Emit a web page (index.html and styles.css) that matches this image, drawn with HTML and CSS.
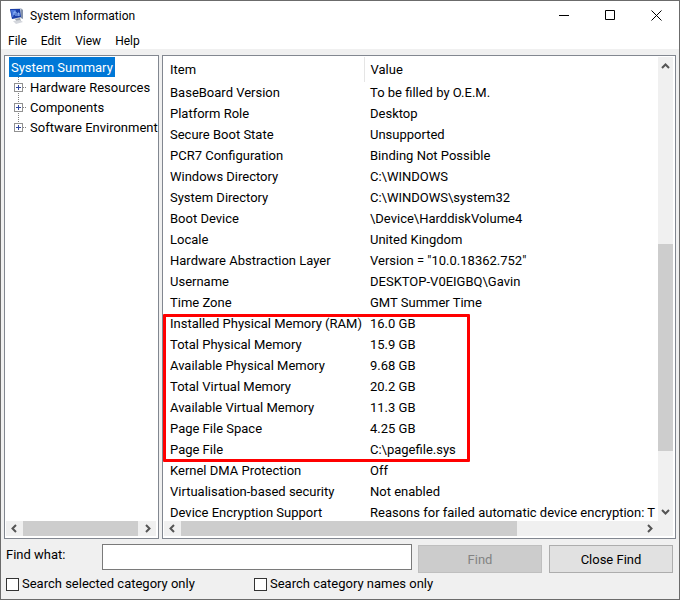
FILE: index.html
```html
<!DOCTYPE html>
<html lang="en">
<head>
    <meta charset="UTF-8">
    <meta name="viewport" content="width=device-width, initial-scale=1.0">
    <title>System Information</title>
    <link rel="stylesheet" href="styles.css">
</head>
<body>
    <div class="window">
        <header class="titlebar">
            <svg class="app-icon" width="16" height="16" viewBox="0 0 16 16">
                <path d="M1 1 L12 0 L14 2 L14 10 L3 11 Z" fill="#c3cbd8"/>
                <path d="M1 1 L11 1 L12 9 L3 11 Z" fill="#1b3fa8"/>
                <path d="M2 2 L7 2 L4 9 L3 9 Z" fill="#4d78dc"/>
                <path d="M5 7 V4 H7 V8 M9 8 V5 H10 V8" fill="none" stroke="#9fc4ff"/>
                <path d="M12 1 L14 2 L14 11 L12 10 Z" fill="#8592aa"/>
                <path d="M6 11 L11 10 L12 13 L8 14 Z" fill="#9da3ae"/>
                <path d="M4 13 L11 12 L14 14 L7 16 Z" fill="#d3d6dc"/>
            </svg>
            <h1>System Information</h1>
            <div class="window-buttons">
                <button type="button" aria-label="Minimise">
                    <svg width="11" height="11"><path d="M0 5.5 H10"/></svg>
                </button>
                <button type="button" aria-label="Maximise">
                    <svg width="11" height="11"><path d="M0.5 0.5 H9.5 V9.5 H0.5 Z"/></svg>
                </button>
                <button type="button" aria-label="Close">
                    <svg width="11" height="11"><path d="M0.5 0.5 L10.5 10.5 M10.5 0.5 L0.5 10.5"/></svg>
                </button>
            </div>
        </header>

        <nav class="menubar">
            <button type="button">File</button>
            <button type="button">Edit</button>
            <button type="button">View</button>
            <button type="button">Help</button>
        </nav>

        <main class="panes">
            <section class="pane tree-pane">
                <ul class="tree">
                    <li class="root"><span class="selected">System Summary</span></li>
                    <li class="node">
                        <svg width="16" height="20"><path class="line" d="M4.5 0 V20 M9 10.5 H13"/><rect x="0.5" y="6.5" width="8" height="8"/><path class="plus" d="M2 10.5 H7 M4.5 8 V13"/></svg>
                        <span>Hardware Resources</span>
                    </li>
                    <li class="node">
                        <svg width="16" height="20"><path class="line" d="M4.5 0 V20 M9 10.5 H13"/><rect x="0.5" y="6.5" width="8" height="8"/><path class="plus" d="M2 10.5 H7 M4.5 8 V13"/></svg>
                        <span>Components</span>
                    </li>
                    <li class="node">
                        <svg width="16" height="20"><path class="line" d="M4.5 0 V10 M9 10.5 H13"/><rect x="0.5" y="6.5" width="8" height="8"/><path class="plus" d="M2 10.5 H7 M4.5 8 V13"/></svg>
                        <span>Software Environment</span>
                    </li>
                </ul>
                <div class="scroll-x">
                    <svg class="arrow" width="17" height="15"><path d="M10 4 L6.5 7.5 L10 11"/></svg>
                    <div class="track"><div class="thumb thumb-tree"></div></div>
                    <svg class="arrow" width="17" height="15"><path d="M7 4 L10.5 7.5 L7 11"/></svg>
                </div>
            </section>

            <section class="pane list-pane">
                <div class="list">
                    <table>
                        <thead>
                            <tr><th>Item</th><th>Value</th></tr>
                        </thead>
                        <tbody>
                            <tr><td>BaseBoard Version</td><td>To be filled by O.E.M.</td></tr>
                            <tr><td>Platform Role</td><td>Desktop</td></tr>
                            <tr><td>Secure Boot State</td><td>Unsupported</td></tr>
                            <tr><td>PCR7 Configuration</td><td>Binding Not Possible</td></tr>
                            <tr><td>Windows Directory</td><td>C:\WINDOWS</td></tr>
                            <tr><td>System Directory</td><td>C:\WINDOWS\system32</td></tr>
                            <tr><td>Boot Device</td><td>\Device\HarddiskVolume4</td></tr>
                            <tr><td>Locale</td><td>United Kingdom</td></tr>
                            <tr><td>Hardware Abstraction Layer</td><td>Version = "10.0.18362.752"</td></tr>
                            <tr><td>Username</td><td>DESKTOP-V0EIGBQ\Gavin</td></tr>
                            <tr><td>Time Zone</td><td>GMT Summer Time</td></tr>
                            <tr><td>Installed Physical Memory (RAM)</td><td>16.0 GB</td></tr>
                            <tr><td>Total Physical Memory</td><td>15.9 GB</td></tr>
                            <tr><td>Available Physical Memory</td><td>9.68 GB</td></tr>
                            <tr><td>Total Virtual Memory</td><td>20.2 GB</td></tr>
                            <tr><td>Available Virtual Memory</td><td>11.3 GB</td></tr>
                            <tr><td>Page File Space</td><td>4.25 GB</td></tr>
                            <tr><td>Page File</td><td>C:\pagefile.sys</td></tr>
                            <tr><td>Kernel DMA Protection</td><td>Off</td></tr>
                            <tr><td>Virtualisation-based security</td><td>Not enabled</td></tr>
                            <tr><td>Device Encryption Support</td><td>Reasons for failed automatic device encryption: T</td></tr>
                        </tbody>
                    </table>
                </div>
                <div class="highlight"></div>
                <div class="scroll-y">
                    <svg class="arrow" width="15" height="17"><path d="M4 11 L7.5 7.5 L11 11"/></svg>
                    <div class="track"><div class="thumb"></div></div>
                    <svg class="arrow" width="15" height="17"><path d="M4 6 L7.5 9.5 L11 6"/></svg>
                </div>
                <div class="scroll-x">
                    <svg class="arrow" width="17" height="15"><path d="M10 4 L6.5 7.5 L10 11"/></svg>
                    <div class="track"><div class="thumb thumb-list"></div></div>
                    <svg class="arrow" width="17" height="15"><path d="M7 4 L10.5 7.5 L7 11"/></svg>
                </div>
                <div class="corner"></div>
            </section>
        </main>

        <form class="find">
            <div class="find-row">
                <label class="find-label" for="findWhat">Find what:</label>
                <input class="find-text" type="text" id="findWhat" name="findWhat">
                <button type="button" disabled>Find</button>
                <button type="button">Close Find</button>
            </div>
            <div class="check-row">
                <label for="selectedOnly"><input type="checkbox" id="selectedOnly">Search selected category only</label>
                <label for="namesOnly"><input type="checkbox" id="namesOnly">Search category names only</label>
            </div>
        </form>
    </div>
</body>
</html>
```
FILE: styles.css
```css
* {
    box-sizing: border-box;
}

body {
    margin: 0;
    font-family: Roboto, "Noto Sans", sans-serif;
    font-size: 13px;
    line-height: 20px;
    color: #000;
}

button, input {
    font: inherit;
    color: inherit;
}

svg {
    display: block;
    flex: none;
}

.window {
    display: flex;
    flex-direction: column;
    height: 100vh;
    overflow: hidden;
    border: 1px solid #6b6b6b;
    background-color: #f0f0f0;
}

/* title bar and menu */
.titlebar {
    display: flex;
    align-items: center;
    height: 29px;
    padding-left: 8px;
    background-color: #fff;
}

.titlebar h1 {
    flex: 1;
    margin: 0 0 0 5px;
    font-size: 12px;
    font-weight: normal;
}

.window-buttons {
    display: flex;
}

.window-buttons button {
    display: flex;
    align-items: center;
    justify-content: center;
    width: 46px;
    height: 29px;
    padding: 0;
    border: none;
    background: none;
}

.window-buttons path {
    fill: none;
    stroke: #000;
}

.menubar {
    display: flex;
    height: 19px;
    background-color: #fff;
}

.menubar button {
    padding: 3px 7px 0 7px;
    border: none;
    background: none;
    font-size: 12px;
    line-height: 16px;
}

/* panes */
.panes {
    display: flex;
    flex: 1;
    gap: 3px;
    min-height: 0;
    padding: 6px 3px 0 3px;
}

.pane {
    padding: 1px 2px 2px 1px;
    border: 1px solid #828790;
    background-color: #fff;
}

.tree-pane {
    display: flex;
    flex-direction: column;
    justify-content: space-between;
    width: 155px;
}

.tree {
    margin: 0;
    padding: 0 0 0 3px;
    list-style: none;
    line-height: 18px;
    white-space: nowrap;
}

.root {
    display: flex;
}

.selected {
    padding: 2px 2px 0 2px;
    background-color: #0078d7;
    color: #fff;
}

.node {
    display: flex;
    padding-left: 5px;
}

.node span {
    padding-top: 2px;
}

.node .line {
    stroke: #808080;
    stroke-dasharray: 1 1;
}

.node rect {
    fill: #fff;
    stroke: #919191;
}

.node .plus {
    stroke: #31479e;
}

.list-pane {
    position: relative;
    display: grid;
    flex: 1;
    grid-template-columns: 1fr 15px;
    grid-template-rows: 1fr 15px;
    min-width: 0;
}

.list {
    min-width: 0;
    min-height: 0;
    overflow: hidden;
}

table {
    width: 100%;
    border-collapse: collapse;
    table-layout: fixed;
    white-space: nowrap;
}

th, td {
    height: 21px;
    padding: 0 0 0 6px;
    font-weight: normal;
    text-align: left;
}

th {
    height: 25px;
}

th:first-child {
    width: 200px;
    border-right: 1px solid #e5e5e5;
}

/* red frame around the memory rows */
.highlight {
    position: absolute;
    top: 258px;
    left: 0;
    width: 307px;
    height: 148px;
    border: 3px solid #f00;
    border-radius: 1px;
}

/* scroll bars */
.scroll-x, .scroll-y {
    display: flex;
    background-color: #f0f0f0;
}

.scroll-x {
    height: 15px;
}

.scroll-y {
    flex-direction: column;
}

.corner {
    background-color: #f0f0f0;
}

.track {
    flex: 1;
}

.thumb {
    background-color: #cdcdcd;
}

.scroll-x .thumb {
    height: 100%;
}

.thumb-tree {
    width: 99%;
}

.thumb-list {
    width: 73%;
}

.scroll-y .track {
    display: flex;
    flex-direction: column;
    justify-content: flex-end;
    padding-bottom: 53px;
}

.scroll-y .thumb {
    height: 55%;
}

.arrow path {
    fill: none;
    stroke: #555;
    stroke-width: 2;
}

/* find bar */
.find {
    padding: 5px 6px 7px 5px;
}

.find-row {
    display: flex;
    height: 29px;
}

.find-label {
    width: 96px;
    padding-top: 1px;
}

.find-text {
    flex: 1;
    min-width: 0;
    height: 26px;
    margin-right: 6px;
    border: 1px solid #7a7a7a;
    background-color: #fff;
}

.find-row button {
    width: 124px;
    height: 28px;
    margin-top: 1px;
    padding: 1px 0 0 0;
    border: 1px solid #adadad;
    background-color: #e1e1e1;
}

.find-row button:disabled {
    margin-right: 7px;
    border-color: #bfbfbf;
    background-color: #ccc;
    color: #838383;
}

.check-row {
    display: flex;
    padding-top: 3px;
}

.check-row label {
    display: flex;
    align-items: center;
    width: 248px;
    height: 16px;
}

.check-row input {
    appearance: none;
    width: 13px;
    height: 13px;
    margin: 0 3px 0 0;
    border: 1px solid #333;
    background-color: #fff;
}

.check-row input:checked {
    background-color: #0078d7;
}
```
